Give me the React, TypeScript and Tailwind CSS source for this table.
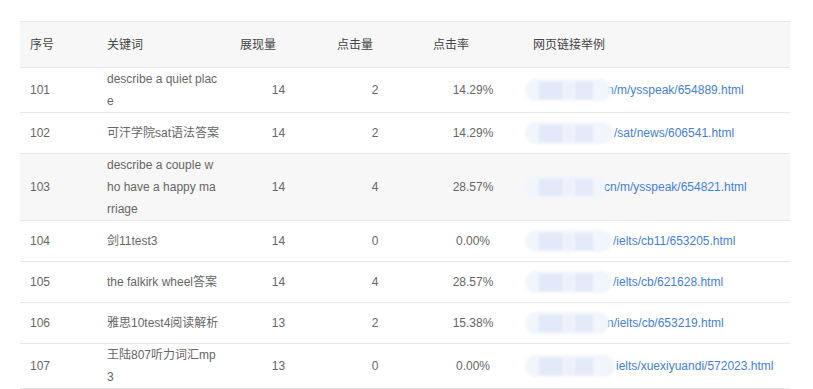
import React from "react";

type Row = {
  id: string;
  kw: string;
  show: string;
  click: string;
  rate: string;
  link: string;
  linkStart: number; // px offset from cell content start (x=533)
  blobW: number;
  hover?: boolean;
};

const rows: Row[] = [
  { id: "101", kw: "describe a quiet place", show: "14", click: "2", rate: "14.29%", link: "n/m/ysspeak/654889.html", linkStart: 74, blobW: 86 },
  { id: "102", kw: "可汗学院sat语法答案", show: "14", click: "2", rate: "14.29%", link: "/sat/news/606541.html", linkStart: 81, blobW: 88 },
  { id: "103", kw: "describe a couple who have a happy marriage", show: "14", click: "4", rate: "28.57%", link: "cn/m/ysspeak/654821.html", linkStart: 71, blobW: 80, hover: true },
  { id: "104", kw: "剑11test3", show: "14", click: "0", rate: "0.00%", link: "/ielts/cb11/653205.html", linkStart: 80, blobW: 87 },
  { id: "105", kw: "the falkirk wheel答案", show: "14", click: "4", rate: "28.57%", link: "/ielts/cb/621628.html", linkStart: 80, blobW: 87 },
  { id: "106", kw: "雅思10test4阅读解析", show: "13", click: "2", rate: "15.38%", link: "n/ielts/cb/653219.html", linkStart: 74, blobW: 84 },
  { id: "107", kw: "王陆807听力词汇mp3", show: "13", click: "0", rate: "0.00%", link: "ielts/xuexiyuandi/572023.html", linkStart: 83, blobW: 90 },
];

function Blob({ w }: { w: number }) {
  return (
    <div
      className="absolute left-[-8px] top-1/2 -translate-y-1/2 h-[22px] pointer-events-none"
      style={{ width: w }}
    >
      <div className="absolute inset-0 rounded-[11px] bg-[#f1f5fc] blur-[1.5px]" />
      <div className="absolute left-[14px] top-[3px] h-[17px] w-[24px] bg-[#e2e9f8] blur-[1px]" />
      <div className="absolute left-[40px] top-[4px] h-[15px] w-[8px] bg-[#ebf0fa] blur-[1px]" />
      <div className="absolute left-[50px] top-[3px] h-[17px] w-[18px] bg-[#e4eaf8] blur-[1px]" />
    </div>
  );
}

export default function App() {
  return (
    <div className="w-[813px] h-[389px] bg-white overflow-hidden font-['Liberation_Sans','Noto_Sans_CJK_SC',sans-serif] text-[12px]">
      <div className="ml-[20px] mt-[21px] w-[770px]">
        <div className="grid grid-cols-[77px_133px_97px_96px_100px_1fr] h-[47px] items-center bg-[#f7f7f7] border-y border-[#e8e8e8] text-[#444]">
          <div className="px-[10px]">序号</div>
          <div className="px-[10px]">关键词</div>
          <div className="px-[10px]">展现量</div>
          <div className="px-[10px]">点击量</div>
          <div className="px-[10px]">点击率</div>
          <div className="px-[10px]">网页链接举例</div>
        </div>
        {rows.map((r) => (
          <div
            key={r.id}
            className={
              "grid grid-cols-[77px_133px_97px_96px_100px_1fr] min-h-[41px] items-center border-b border-[#e8e8e8] text-[#666] " +
              (r.hover ? "bg-[#f7f7f7]" : "bg-white")
            }
          >
            <div className="px-[10px]">{r.id}</div>
            <div className="pl-[10px] pr-[10.6px] leading-[22px] break-all">{r.kw}</div>
            <div className="text-center">{r.show}</div>
            <div className="text-center">{r.click}</div>
            <div className="text-center">{r.rate}</div>
            <div className="px-[10px]">
              <div className="relative h-[22px] flex items-center">
                <span className="text-[#4580d8] whitespace-nowrap" style={{ marginLeft: r.linkStart }}>
                  {r.link}
                </span>
                <Blob w={r.blobW} />
              </div>
            </div>
          </div>
        ))}
      </div>
    </div>
  );
}
